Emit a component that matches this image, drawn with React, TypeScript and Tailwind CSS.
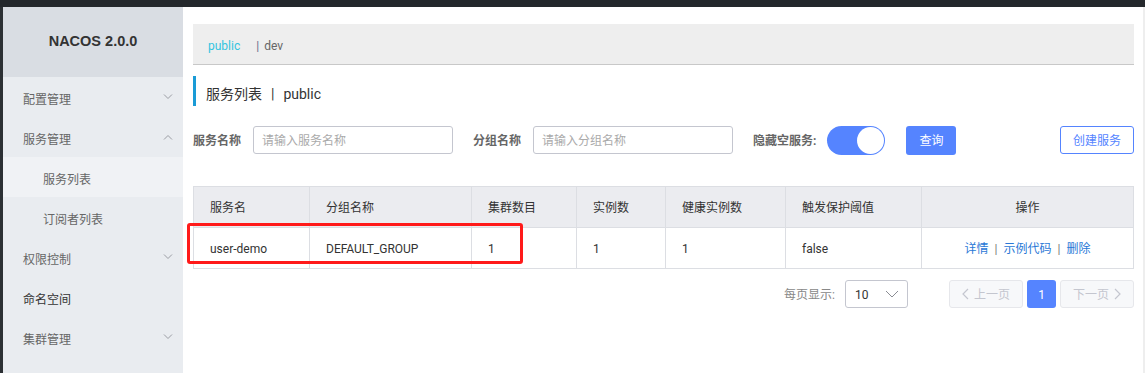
import React from "react";

const Chevron = ({ up = false }: { up?: boolean }) => (
  <svg width="10" height="6" viewBox="0 0 10 6" className="text-[#9a9ca3]">
    <path d={up ? "M1 5.5 L5 1.5 L9 5.5" : "M1 0.5 L5 4.5 L9 0.5"} fill="none" stroke="currentColor" strokeWidth="1" />
  </svg>
);

const MenuItem = ({ label, chevron, sub, active, dark }: { label: string; chevron?: "up" | "down"; sub?: boolean; active?: boolean; dark?: boolean }) => (
  <div className={`h-[40px] flex items-center justify-between pr-[10px] ${sub ? "pl-[40px]" : "pl-[20px]"} ${active ? "bg-[#f0f2f5]" : ""}`}>
    <span className={`text-[12px] pt-[5px] ${dark ? "text-[#333]" : "text-[#666]"}`}>{label}</span>
    {chevron && <Chevron up={chevron === "up"} />}
  </div>
);

export default function App() {
  const th = "h-[41px] border border-[#dcdee3] text-left pl-[16px] pt-[2px] font-normal text-[12px] text-[#333]";
  const td = "h-[41px] border border-[#dcdee3] text-left pl-[16px] pt-[2px] text-[12px] text-[#333]";
  return (
    <div className="w-[1145px] h-[373px] overflow-hidden flex flex-col bg-white font-[Roboto,'Noto_Sans_CJK_SC',sans-serif]">
      <div className="h-[7px] bg-[#24282c] shrink-0" />
      <div className="flex flex-1 min-h-0">
        <div className="w-[3px] bg-[#2c3034] shrink-0" />
        <aside className="w-[180px] shrink-0 bg-[#e9ecf0] flex flex-col">
          <div className="h-[70px] bg-[#d9dde3] flex items-center justify-center">
            <span className="font-['Liberation_Sans',sans-serif] font-bold text-[14.5px] text-[#333]">NACOS 2.0.0</span>
          </div>
          <MenuItem label="配置管理" chevron="down" />
          <MenuItem label="服务管理" chevron="up" />
          <MenuItem label="服务列表" sub active />
          <MenuItem label="订阅者列表" sub />
          <MenuItem label="权限控制" chevron="down" />
          <MenuItem label="命名空间" dark />
          <MenuItem label="集群管理" chevron="down" />
        </aside>
        <main className="relative flex-1 pl-[10px] pr-[9px] flex flex-col">
          <div className="mt-[17px] h-[41px] bg-[#eeeeee] border-b border-[#c8c8c8] flex items-center pl-[15px] pt-[3px] text-[12px]">
            <span className="text-[#33c4e0]">public</span>
            <span className="ml-[16px] text-[#6a6a8a]">|</span>
            <span className="ml-[5px] text-[#666]">dev</span>
          </div>
          <div className="mt-[11px] h-[30px] border-l-[3px] border-[#1a9bd6] flex items-center pl-[10px] pt-[6px] text-[14px] text-[#333]">
            <span>服务列表</span>
            <span className="mx-[9px]">|</span>
            <span>public</span>
          </div>
          <div className="mt-[20px] h-[28px] flex items-center text-[12px]">
            <span className="font-bold text-[#666] w-[60px] pt-[2px]">服务名称</span>
            <div className="w-[200px] h-[28px] border border-[#c4c6cf] rounded-[3px] flex items-center pl-[8px] pt-[2px] text-[#aaa]">请输入服务名称</div>
            <span className="ml-[20px] font-bold text-[#666] w-[60px] pt-[2px]">分组名称</span>
            <div className="w-[200px] h-[28px] border border-[#c4c6cf] rounded-[3px] flex items-center pl-[8px] pt-[2px] text-[#aaa]">请输入分组名称</div>
            <span className="ml-[20px] font-bold text-[#666] pt-[2px]">隐藏空服务:</span>
            <div className="ml-[11px] w-[58px] h-[29px] rounded-full bg-[#5584ff] flex items-center justify-end pr-[1px]">
              <div className="w-[27px] h-[27px] rounded-full bg-white" />
            </div>
            <div className="ml-[21px] w-[50px] h-[29px] rounded-[3px] bg-[#5584ff] text-white flex items-center justify-center pt-[2px]">查询</div>
            <div className="ml-auto w-[74px] h-[28px] rounded-[3px] border border-[#5584ff] text-[#5584ff] flex items-center justify-center pt-[2px]">创建服务</div>
          </div>
          <table className="mt-[32px] w-[940px] table-fixed border-collapse">
            <colgroup>
              <col className="w-[116px]" />
              <col className="w-[162px]" />
              <col className="w-[105px]" />
              <col className="w-[89px]" />
              <col className="w-[120px]" />
              <col className="w-[136px]" />
              <col className="w-[212px]" />
            </colgroup>
            <thead>
              <tr className="bg-[#ebecf0]">
                <th className={th}>服务名</th>
                <th className={th}>分组名称</th>
                <th className={th}>集群数目</th>
                <th className={th}>实例数</th>
                <th className={th}>健康实例数</th>
                <th className={th}>触发保护阈值</th>
                <th className="h-[41px] border border-[#dcdee3] text-center pt-[2px] font-normal text-[12px] text-[#333]">操作</th>
              </tr>
            </thead>
            <tbody>
              <tr>
                <td className={td}>user-demo</td>
                <td className={td}>DEFAULT_GROUP</td>
                <td className={td}>1</td>
                <td className={td}>1</td>
                <td className={td}>1</td>
                <td className={td}>false</td>
                <td className="h-[41px] border border-[#dcdee3] text-center pt-[2px] text-[12px]">
                  <span className="text-[#2a78d6]">详情</span>
                  <span className="mx-[6px] text-[#777]">|</span>
                  <span className="text-[#2a78d6]">示例代码</span>
                  <span className="mx-[6px] text-[#777]">|</span>
                  <span className="text-[#2a78d6]">删除</span>
                </td>
              </tr>
            </tbody>
          </table>
          <div className="mt-[11px] h-[28px] flex items-center text-[12px]">
            <span className="ml-auto text-[#888] pt-[2px]">每页显示:</span>
            <div className="ml-[10px] w-[63px] h-[28px] border border-[#c4c6cf] rounded-[3px] flex items-center justify-between pl-[9px] pr-[8px] text-[#333]">
              <span className="pt-[2px]">10</span>
              <svg width="14" height="8" viewBox="0 0 14 8"><path d="M1 1 L7 7 L13 1" fill="none" stroke="#8a8c93" strokeWidth="1" /></svg>
            </div>
            <div className="ml-[41px] w-[74px] h-[28px] rounded-[3px] border border-[#e6e7eb] bg-[#f7f8fa] text-[#c4c6cf] flex items-center justify-center gap-[5px]">
              <svg width="7" height="12" viewBox="0 0 7 12"><path d="M6 1 L1 6 L6 11" fill="none" stroke="#c4c6cf" strokeWidth="1.2" /></svg>
              <span className="pt-[2px]">上一页</span>
            </div>
            <div className="ml-[4px] w-[29px] h-[28px] rounded-[3px] bg-[#5584ff] text-white flex items-center justify-center pt-[2px]">1</div>
            <div className="ml-[4px] w-[74px] h-[28px] rounded-[3px] border border-[#e6e7eb] bg-[#f7f8fa] text-[#c4c6cf] flex items-center justify-center gap-[5px]">
              <span className="pt-[2px]">下一页</span>
              <svg width="7" height="12" viewBox="0 0 7 12"><path d="M1 1 L6 6 L1 11" fill="none" stroke="#c4c6cf" strokeWidth="1.2" /></svg>
            </div>
          </div>
          <div className="absolute left-[4px] top-[216px] w-[336px] h-[41px] border-[3px] border-[#ff1a1a] rounded-[3px] pointer-events-none" />
        </main>
        <div className="w-[3px] bg-[#eeeeee] shrink-0" />
      </div>
    </div>
  );
}
